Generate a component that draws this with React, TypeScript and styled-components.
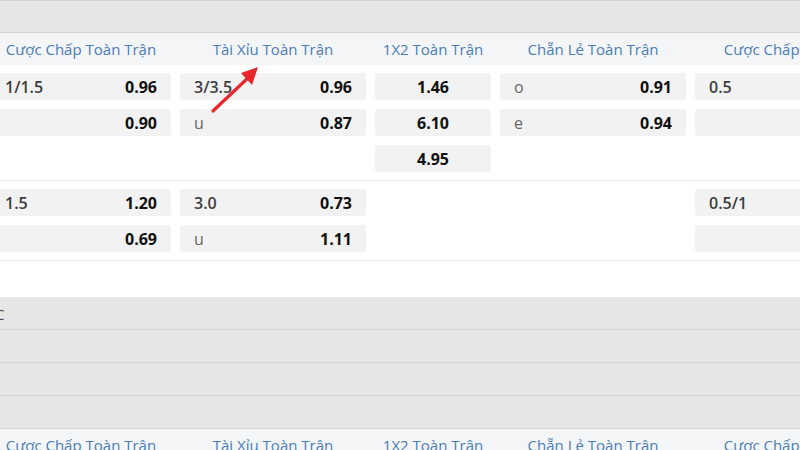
import * as React from "react";
import styled, { createGlobalStyle } from "styled-components";

const GlobalStyle = createGlobalStyle`
	html, body {
		margin: 0;
		padding: 0;
		background: #ffffff;
		overflow: hidden;
	}
	body {
		font-family: "Open Sans", "Noto Sans", sans-serif;
	}
`;

const Page = styled.div`
	position: relative;
	width: 800px;
	height: 450px;
	overflow: hidden;
`;

const Board = styled.div`
	margin-left: -9px;
	width: 1100px;
`;

const LeagueBar = styled.div<{ $top?: boolean }>`
	height: ${(p) => (p.$top ? "33px" : "33px")};
	background: #e6e6e6;
	border-top: 1px solid ${(p) => (p.$top ? "#d2d2d2" : "#e6e6e6")};
	border-bottom: 1px solid #d3d3d3;
	display: flex;
	align-items: center;
	font-size: 15px;
	color: #444;
	box-sizing: border-box;
`;

const LeagueName = styled.span`
	margin-left: 4px;
`;

const Columns = "180px 186px 116px 186px 208px";

const HeaderRow = styled.div`
	height: 32px;
	background: #f4f5f6;
	display: grid;
	grid-template-columns: ${Columns};
	column-gap: 9px;
	align-items: center;
`;

const HeaderCell = styled.div`
	text-align: center;
	color: #4a7db4;
	font-size: 15px;
	white-space: nowrap;
`;

const Group = styled.div`
	padding: 8px 0;
	border-bottom: 1px solid #e6e6e6;
	display: grid;
	grid-template-columns: ${Columns};
	grid-auto-rows: 27px;
	column-gap: 9px;
	row-gap: 9px;
`;

const Cell = styled.div<{ $center?: boolean }>`
	background: #f2f2f2;
	border-radius: 3px;
	display: flex;
	align-items: center;
	justify-content: ${(p) => (p.$center ? "center" : "space-between")};
	padding: 0 14px;
	font-size: 16px;
	box-sizing: border-box;
	width: 100%;
`;

const Blank = styled.div``;

const Label = styled.span<{ $soft?: boolean }>`
	color: ${(p) => (p.$soft ? "#666" : "#3c3c3c")};
	font-weight: ${(p) => (p.$soft ? 400 : 600)};
`;

const Price = styled.span`
	color: #111;
	font-weight: 700;
`;

const Spacer = styled.div`
	height: 36px;
`;

const Arrow = styled.svg`
	position: absolute;
	left: 205px;
	top: 60px;
`;

type Entry = null | { label?: string; soft?: boolean; price?: string; center?: boolean };

const headers = [
	"Cược Chấp Toàn Trận",
	"Tài Xỉu Toàn Trận",
	"1X2 Toàn Trận",
	"Chẵn Lẻ Toàn Trận",
	"Cược Chấp Toàn Trận",
];

const groupOne: Entry[] = [
	{ label: "1/1.5", price: "0.96" },
	{ label: "3/3.5", price: "0.96" },
	{ price: "1.46", center: true },
	{ label: "o", soft: true, price: "0.91" },
	{ label: "0.5" },
	{ price: "0.90" },
	{ label: "u", soft: true, price: "0.87" },
	{ price: "6.10", center: true },
	{ label: "e", soft: true, price: "0.94" },
	{},
	null,
	null,
	{ price: "4.95", center: true },
	null,
	null,
];

const groupTwo: Entry[] = [
	{ label: "1.5", price: "1.20" },
	{ label: "3.0", price: "0.73" },
	null,
	null,
	{ label: "0.5/1" },
	{ price: "0.69" },
	{ label: "u", soft: true, price: "1.11" },
	null,
	null,
	{},
];

const Header: React.FC = () => (
	<HeaderRow>
		{headers.map((h, i) => (
			<HeaderCell key={i}>{h}</HeaderCell>
		))}
	</HeaderRow>
);

const OddsGroup: React.FC<{ entries: Entry[] }> = ({ entries }) => (
	<Group>
		{entries.map((e, i) =>
			e === null ? (
				<Blank key={i} />
			) : (
				<Cell key={i} $center={e.center}>
					{!e.center && <Label $soft={e.soft}>{e.label ?? ""}</Label>}
					{e.price && <Price>{e.price}</Price>}
				</Cell>
			),
		)}
	</Group>
);

const App: React.FC = () => (
	<Page>
		<GlobalStyle />
		<Board>
			<LeagueBar $top />
			<Header />
			<OddsGroup entries={groupOne} />
			<OddsGroup entries={groupTwo} />
			<Spacer />
			<LeagueBar>
				<LeagueName>C</LeagueName>
			</LeagueBar>
			<LeagueBar />
			<LeagueBar />
			<LeagueBar />
			<Header />
		</Board>
		<Arrow width="60" height="60" viewBox="0 0 60 60">
			<line x1="8" y1="51" x2="45" y2="16" stroke="#e8262b" strokeWidth="3.2" strokeLinecap="round" />
			<polygon points="53,7 36,13 47,25" fill="#e8262b" />
		</Arrow>
	</Page>
);

export default App;
